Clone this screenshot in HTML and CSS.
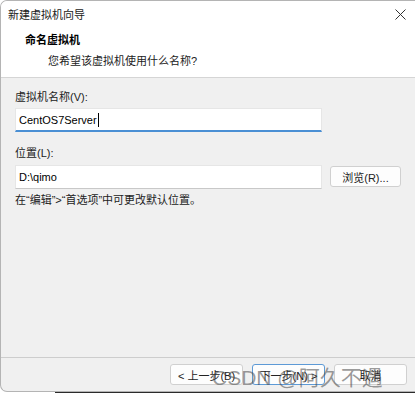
FILE: index.html
```html
<!DOCTYPE html>
<html lang="zh-CN">

<head>
  <meta charset="UTF-8" />
  <title>新建虚拟机向导</title>
  <link rel="stylesheet" href="styles.css">
</head>

<body>
  <div class="window">
    <div class="titlebar">
      <span class="title">新建虚拟机向导</span>
      <svg class="close" width="11" height="11" viewBox="0 0 11 11">
        <path d="M0.5 0.5 L10.5 10.5 M10.5 0.5 L0.5 10.5" stroke="#333" stroke-width="1" fill="none" />
      </svg>
    </div>
    <div class="header">
      <div class="header-title">命名虚拟机</div>
      <div class="header-sub">您希望该虚拟机使用什么名称?</div>
    </div>
    <div class="content">
      <label class="label first">虚拟机名称(V):</label>
      <div class="input active">CentOS7Server<span class="caret"></span></div>
      <label class="label second">位置(L):</label>
      <div class="row">
        <div class="input">D:\qimo</div>
        <button class="btn browse">浏览(R)...</button>
      </div>
      <p class="hint">在“编辑”&gt;“首选项”中可更改默认位置。</p>
    </div>
    <div class="footer">
      <button class="btn">&lt; 上一步(B)</button>
      <button class="btn primary">下一步(N) &gt;</button>
      <button class="btn">取消</button>
      <span class="watermark">CSDN @阿久不遇</span>
    </div>
  </div>
  <div class="taskbar"></div>
</body>

</html>
```

FILE: styles.css
```css
body {
  margin: 0;
  background: #fff;
  font-family: 'Liberation Sans', 'Noto Sans CJK SC', sans-serif;
  font-size: 11px;
  color: #000;
  width: 415px;
  height: 393px;
  overflow: hidden;
}

.window {
  width: 414px;
  height: 390px;
  border: 1px solid #b4b4b4;
  border-right: none;
  border-radius: 7px 0 0 7px;
  background: #f0f0f0;
  display: flex;
  flex-direction: column;
  overflow: hidden;
}

.titlebar {
  height: 26px;
  background: #fff;
  display: flex;
  align-items: center;
  justify-content: space-between;
  padding: 0 9px 0 7px;
}

.title {
  font-size: 11px;
  color: #1a1a1a;
}

.header {
  height: 50px;
  background: #fff;
  border-bottom: 1px solid #d5d5d5;
  padding-left: 24px;
}

.header-title {
  font-weight: bold;
  line-height: 16px;
  margin-top: 5px;
}

.header-sub {
  line-height: 16px;
  margin-top: 5px;
  padding-left: 23px;
  color: #222;
}

.content {
  flex: 1;
  padding: 11px 0 0 14px;
  border-bottom: 1px solid #cdcdcd;
}

.label {
  display: block;
  line-height: 16px;
  color: #222;
}

.label.second {
  margin-top: 13px;
}

.input {
  width: 302px;
  height: 22px;
  margin-top: 3px;
  background: #fff;
  border: 1px solid #e6e6e6;
  border-bottom: 1px solid #c8c8c8;
  padding-left: 3px;
  line-height: 21px;
  display: flex;
  align-items: center;
}

.input.active {
  border-bottom: 2px solid #4a8fd4;
  height: 21px;
  line-height: 20px;
}

.caret {
  display: inline-block;
  width: 1px;
  height: 14px;
  background: #000;
  margin-left: 1px;
}

.row {
  display: flex;
  align-items: flex-start;
  gap: 8px;
  margin-top: 1px;
}

.btn {
  width: 73px;
  height: 21px;
  background: #fdfdfd;
  border: 1px solid #d0d0d0;
  border-radius: 3px;
  font-family: inherit;
  font-size: 11px;
  color: #222;
  padding: 0;
}

.browse {
  width: 71px;
  margin-top: 4px;
}

.hint {
  margin: 3px 0 0;
  line-height: 16px;
  color: #222;
}

.footer {
  position: relative;
  height: 33px;
  display: flex;
  justify-content: flex-end;
  align-items: flex-start;
  gap: 9px;
  padding: 6px 8px 0 0;
  box-sizing: border-box;
}

.btn.primary {
  border: 1px solid #5d9ad6;
}

.watermark {
  position: absolute;
  left: 211px;
  top: 3px;
  font-size: 21px;
  color: rgba(70, 70, 70, 0.55);
  white-space: nowrap;
  pointer-events: none;
}

.taskbar {
  height: 3px;
  margin-left: 55px;
  background: #2b2b2b;
}
```
